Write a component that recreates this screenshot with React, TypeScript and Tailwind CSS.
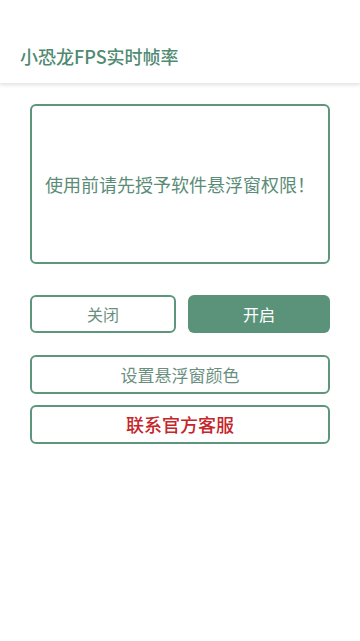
export default function App() {
  const font = { fontFamily: '"Noto Sans CJK SC", "Noto Sans", sans-serif' };
  return (
    <div className="min-h-[641px] w-[360px] bg-white" style={font}>
      {/* 标题栏 */}
      <header className="flex h-[83px] items-end bg-white pb-[18px] pl-5 shadow-[0_2px_4px_rgba(0,0,0,0.12)]">
        <h1 className="text-[18px] font-medium leading-none text-[#4f8a72]">
          小恐龙FPS实时帧率
        </h1>
      </header>

      <main className="flex flex-col px-[30px] pt-[21px]">
        {/* 提示框 */}
        <div className="flex h-[160px] items-center justify-center rounded-[6px] border-2 border-[#5e967d]">
          <p className="text-[18px] leading-none text-[#5b8c77]">
            使用前请先授予软件悬浮窗权限！
          </p>
        </div>

        <div className="mt-[31px] flex gap-3">
          <button className="flex h-[38px] flex-1 items-center justify-center rounded-[6px] border-2 border-[#5e967d] text-[16px] text-[#6b8f7f]">
            关闭
          </button>
          <button className="flex h-[38px] flex-1 items-center justify-center rounded-[6px] bg-[#5a937a] text-[16px] text-white">
            开启
          </button>
        </div>

        <button className="mt-[22px] flex h-[39px] items-center justify-center rounded-[6px] border-2 border-[#5e967d] text-[17px] text-[#6b8f7f]">
          设置悬浮窗颜色
        </button>
        <button className="mt-[11px] flex h-[39px] items-center justify-center rounded-[6px] border-2 border-[#5e967d] text-[18px] font-medium text-[#c4262b]">
          联系官方客服
        </button>
      </main>
    </div>
  );
}
